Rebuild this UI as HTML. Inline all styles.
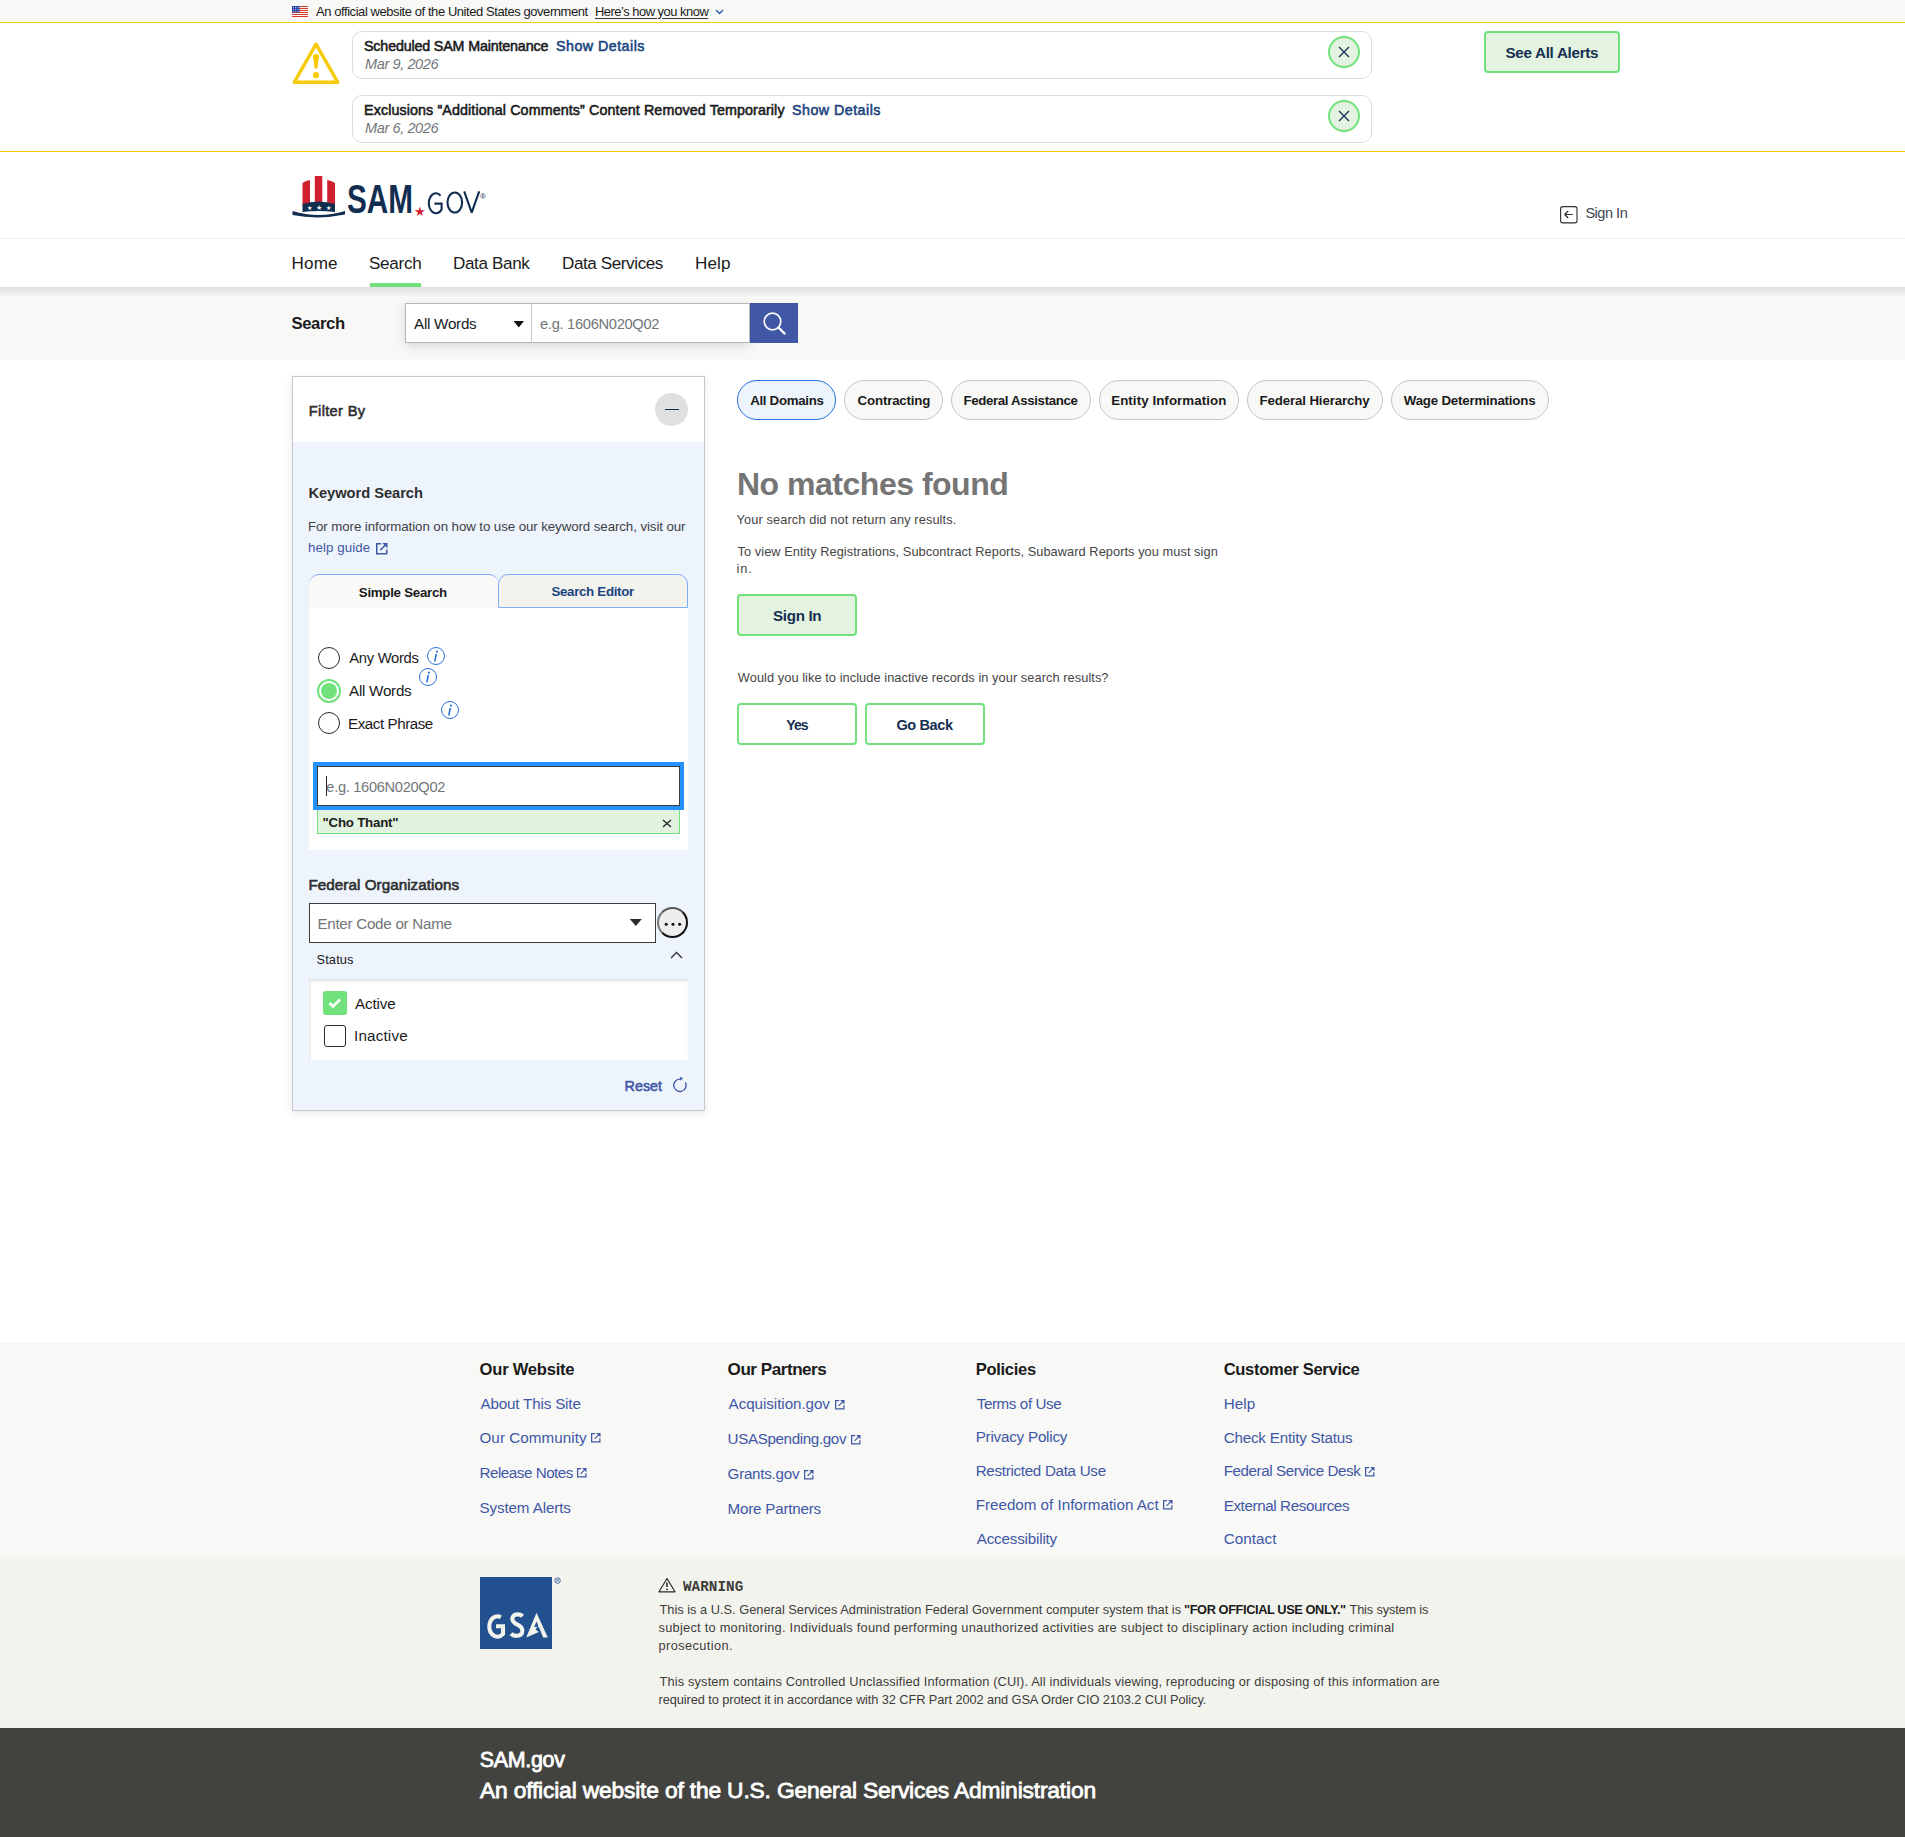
<!DOCTYPE html><html><head><meta charset="utf-8"><title>SAM.gov | Search</title><style>html,body{margin:0;padding:0;background:#fff;width:1905px;height:1837px;overflow:hidden;position:relative;font-family:'Liberation Sans',sans-serif}.t{position:absolute;white-space:nowrap}</style></head><body><div style="position:absolute;left:0px;top:0px;width:1905px;height:22px;background:#f8f8f6"></div>
<div style="position:absolute;left:0px;top:22px;width:1905px;height:1px;background:#f9cc08"></div>
<div style="position:absolute;left:0px;top:151px;width:1905px;height:1px;background:#f9cc08"></div>
<div style="position:absolute;left:0px;top:238px;width:1905px;height:1px;background:#efefea"></div>
<div style="position:absolute;left:0px;top:287px;width:1905px;height:73px;background:#f8f8f6"></div>
<div style="position:absolute;left:0px;top:287px;width:1905px;height:10px;background:linear-gradient(rgba(0,0,0,0.10),rgba(0,0,0,0))"></div>
<svg style="position:absolute;left:292px;top:6px;" width="16" height="11" viewBox="0 0 16 11"><rect width="16" height="11" fill="#fff"/><rect y="0" width="16" height="1.05" fill="#d83a2a"/><rect y="2" width="16" height="1.05" fill="#d83a2a"/><rect y="4" width="16" height="1.05" fill="#d83a2a"/><rect y="6" width="16" height="1.05" fill="#d83a2a"/><rect y="8" width="16" height="1.05" fill="#d83a2a"/><rect y="10" width="16" height="1.05" fill="#d83a2a"/><rect width="7.5" height="6.5" fill="#1f3fa3"/><circle cx="1.4" cy="1.2" r="0.55" fill="#fff"/><circle cx="3.7" cy="1.2" r="0.55" fill="#fff"/><circle cx="6.0" cy="1.2" r="0.55" fill="#fff"/><circle cx="1.4" cy="3.2" r="0.55" fill="#fff"/><circle cx="3.7" cy="3.2" r="0.55" fill="#fff"/><circle cx="6.0" cy="3.2" r="0.55" fill="#fff"/><circle cx="1.4" cy="5.2" r="0.55" fill="#fff"/><circle cx="3.7" cy="5.2" r="0.55" fill="#fff"/><circle cx="6.0" cy="5.2" r="0.55" fill="#fff"/></svg>
<span class="t" style="left:316.00px;top:5.80px;font-family:'Liberation Sans';font-size:12.97px;line-height:12.97px;font-weight:400;font-style:normal;letter-spacing:-0.420px;color:#1b1b1b;">An official website of the United States government</span>
<span class="t" style="left:595.00px;top:5.60px;font-family:'Liberation Sans';font-size:12.95px;line-height:12.95px;font-weight:400;font-style:normal;letter-spacing:-0.500px;color:#1b1b1b;text-decoration:underline;text-underline-offset:1.5px;text-decoration-color:#3a3a3a">Here’s how you know</span>
<svg style="position:absolute;left:715px;top:9px;" width="9" height="6" viewBox="0 0 9 6"><path d="M1 1 L4.5 4.5 L8 1" fill="none" stroke="#2e5ab8" stroke-width="1.5"/></svg>
<svg style="position:absolute;left:292px;top:41px;" width="48" height="44" viewBox="0 0 48 44"><path d="M24 3.2 L45.8 41.3 H2.2 Z" fill="none" stroke="#f7cb09" stroke-width="3.4" stroke-linejoin="round"/><path d="M21 15.2 Q21 13 24 13 Q27 13 27 15.2 L25.6 26.3 Q25.4 27.8 24 27.8 Q22.6 27.8 22.4 26.3 Z" fill="#f7cb09"/><circle cx="24" cy="34.2" r="3.1" fill="#f7cb09"/></svg>
<div style="position:absolute;left:352px;top:31px;width:1020px;height:48px;box-sizing:border-box;border:1px solid #dcdcdc;border-radius:10px;background:#fff"></div>
<div style="position:absolute;left:352px;top:95px;width:1020px;height:48px;box-sizing:border-box;border:1px solid #dcdcdc;border-radius:10px;background:#fff"></div>
<div style="position:absolute;left:1328px;top:36px;width:32px;height:32px;box-sizing:border-box;border:2px solid #70e17b;border-radius:50%;background:#e3f3df"></div>
<svg style="position:absolute;left:1337px;top:45px;" width="14" height="14" viewBox="0 0 14 14"><path d="M2 2 L12 12 M12 2 L2 12" stroke="#162e51" stroke-width="1.3"/></svg>
<div style="position:absolute;left:1328px;top:100px;width:32px;height:32px;box-sizing:border-box;border:2px solid #70e17b;border-radius:50%;background:#e3f3df"></div>
<svg style="position:absolute;left:1337px;top:109px;" width="14" height="14" viewBox="0 0 14 14"><path d="M2 2 L12 12 M12 2 L2 12" stroke="#162e51" stroke-width="1.3"/></svg>
<span class="t" style="left:364.00px;top:39.00px;font-family:'Liberation Sans';font-size:14.3px;line-height:14.3px;font-weight:400;font-style:normal;letter-spacing:-0.167px;color:#1b1b1b;-webkit-text-stroke:0.55px #1b1b1b">Scheduled SAM Maintenance</span>
<span class="t" style="left:556.00px;top:39.00px;font-family:'Liberation Sans';font-size:14.3px;line-height:14.3px;font-weight:400;font-style:normal;letter-spacing:0.455px;color:#1a4480;-webkit-text-stroke:0.55px #1a4480">Show Details</span>
<span class="t" style="left:365.00px;top:57.00px;font-family:'Liberation Sans';font-size:14.54px;line-height:14.54px;font-weight:400;font-style:italic;letter-spacing:-0.400px;color:#71767a;">Mar 9, 2026</span>
<span class="t" style="left:364.00px;top:103.00px;font-family:'Liberation Sans';font-size:14.3px;line-height:14.3px;font-weight:400;font-style:normal;letter-spacing:0.102px;color:#1b1b1b;-webkit-text-stroke:0.55px #1b1b1b">Exclusions “Additional Comments” Content Removed Temporarily</span>
<span class="t" style="left:792.00px;top:103.00px;font-family:'Liberation Sans';font-size:14.3px;line-height:14.3px;font-weight:400;font-style:normal;letter-spacing:0.455px;color:#1a4480;-webkit-text-stroke:0.55px #1a4480">Show Details</span>
<span class="t" style="left:365.00px;top:120.60px;font-family:'Liberation Sans';font-size:14.54px;line-height:14.54px;font-weight:400;font-style:italic;letter-spacing:-0.400px;color:#71767a;">Mar 6, 2026</span>
<div style="position:absolute;left:1484px;top:31px;width:136px;height:42px;box-sizing:border-box;border:2px solid #70e17b;border-radius:4px;background:#e3f3df"></div>
<span class="t" style="left:1505.50px;top:45.40px;font-family:'Liberation Sans';font-size:15.2px;line-height:15.2px;font-weight:700;font-style:normal;letter-spacing:-0.292px;color:#162e51;">See All Alerts</span>
<svg style="position:absolute;left:292px;top:175px;" width="200" height="44" viewBox="0 0 200 44"><path d="M10.5 8 Q14 5.5 18 5 V30 H10.5 Z" fill="#d0202f"/><rect x="22.8" y="1" width="7.5" height="29" fill="#d0202f"/><path d="M35.2 5 Q39 5.5 43 8 V30 H35.2 Z" fill="#d0202f"/><path d="M10.5 29 Q26.5 24 43 29 V37 Q26.5 35 10.5 37 Z" fill="#112e51"/><text x="15" y="35" font-size="6" fill="#fff" font-family="Liberation Sans">★</text><text x="24" y="35" font-size="7" fill="#fff" font-family="Liberation Sans">★</text><text x="34" y="35" font-size="6" fill="#fff" font-family="Liberation Sans">★</text><path d="M0.5 36 Q26.5 44 53 36 V39.5 Q26.5 45 0.5 40 Z" fill="#112e51"/><text x="55" y="38" font-size="40" font-weight="700" fill="#112e51" font-family="Liberation Sans" textLength="66" lengthAdjust="spacingAndGlyphs">SAM</text><text x="121.5" y="41" font-size="13" fill="#d0202f" font-family="Liberation Sans">★</text><g fill="none" stroke="#112e51" stroke-width="2.1"><path d="M148.6 20.6 A7.2 10 0 1 0 149.6 34.5 V28.6 H142.4"/><ellipse cx="162.8" cy="27.5" rx="7.3" ry="10"/><path d="M172.2 16.4 L179.7 37.6 L187.2 16.4" stroke-linejoin="bevel"/></g><text x="188" y="23.5" font-size="8" fill="#112e51" font-family="Liberation Sans">®</text></svg>
<svg style="position:absolute;left:1559px;top:205px;" width="20" height="20" viewBox="0 0 20 20"><rect x="1.6" y="1.6" width="16.4" height="16.3" rx="2.2" fill="none" stroke="#2d2e2a" stroke-width="1.1"/><path d="M5.6 9.5 H13.7 M5.6 9.5 L9.2 6 M5.6 9.5 L9.2 13" fill="none" stroke="#2d2e2a" stroke-width="1.2"/></svg>
<span class="t" style="left:1585.40px;top:206.30px;font-family:'Liberation Sans';font-size:14.54px;line-height:14.54px;font-weight:400;font-style:normal;letter-spacing:-0.483px;color:#3d4551;">Sign In</span>
<span class="t" style="left:291.50px;top:254.80px;font-family:'Liberation Sans';font-size:17.1px;line-height:17.1px;font-weight:400;font-style:normal;letter-spacing:0.167px;color:#1b1b1b;">Home</span>
<span class="t" style="left:369.00px;top:254.80px;font-family:'Liberation Sans';font-size:17.1px;line-height:17.1px;font-weight:400;font-style:normal;letter-spacing:-0.300px;color:#1b1b1b;">Search</span>
<span class="t" style="left:453.00px;top:254.80px;font-family:'Liberation Sans';font-size:17.1px;line-height:17.1px;font-weight:400;font-style:normal;letter-spacing:-0.375px;color:#1b1b1b;">Data Bank</span>
<span class="t" style="left:562.00px;top:254.80px;font-family:'Liberation Sans';font-size:17.1px;line-height:17.1px;font-weight:400;font-style:normal;letter-spacing:-0.417px;color:#1b1b1b;">Data Services</span>
<span class="t" style="left:695.00px;top:254.80px;font-family:'Liberation Sans';font-size:17.1px;line-height:17.1px;font-weight:400;font-style:normal;letter-spacing:0.133px;color:#1b1b1b;">Help</span>
<div style="position:absolute;left:370px;top:283px;width:51px;height:4px;background:#70e17b"></div>
<div style="position:absolute;left:405px;top:303px;width:345px;height:40px;background:#fff;box-shadow:0 3px 10px rgba(0,0,0,0.13)"></div>
<div style="position:absolute;left:405px;top:303px;width:127px;height:40px;box-sizing:border-box;border:1px solid #b8b8b8;background:#fff"></div>
<div style="position:absolute;left:531px;top:303px;width:219px;height:40px;box-sizing:border-box;border:1px solid #b8b8b8;border-left:1px solid #c8c8c8;background:#fff"></div>
<svg style="position:absolute;left:513px;top:320px;" width="12" height="9" viewBox="0 0 12 9"><path d="M0.5 1 H11 L5.75 7.5 Z" fill="#111"/></svg>
<div style="position:absolute;left:750px;top:303px;width:48px;height:40px;background:#4057a5"></div>
<svg style="position:absolute;left:760px;top:311px;" width="28" height="26" viewBox="0 0 28 26"><circle cx="12.5" cy="10.5" r="8.3" fill="none" stroke="#fff" stroke-width="1.7"/><path d="M18.5 16.5 L24.5 22.5" stroke="#fff" stroke-width="2.4" stroke-linecap="round"/></svg>
<span class="t" style="left:291.50px;top:316.00px;font-family:'Liberation Sans';font-size:16.65px;line-height:16.65px;font-weight:700;font-style:normal;letter-spacing:-0.380px;color:#1b1b1b;">Search</span>
<span class="t" style="left:414.00px;top:316.00px;font-family:'Liberation Sans';font-size:15.2px;line-height:15.2px;font-weight:400;font-style:normal;letter-spacing:-0.250px;color:#1b1b1b;">All Words</span>
<span class="t" style="left:540.00px;top:317.00px;font-family:'Liberation Sans';font-size:14.69px;line-height:14.69px;font-weight:400;font-style:normal;letter-spacing:-0.307px;color:#71767a;">e.g. 1606N020Q02</span>
<div style="position:absolute;left:292px;top:376px;width:413px;height:735px;box-sizing:border-box;border:1px solid #c9c9c9;background:#eef4fb;box-shadow:0 2px 8px rgba(0,0,0,0.10)"></div>
<div style="position:absolute;left:293px;top:377px;width:411px;height:65px;background:#fff"></div>
<div style="position:absolute;left:655px;top:393px;width:33px;height:33px;border-radius:50%;background:#e0e0e0"></div>
<div style="position:absolute;left:665px;top:408.6px;width:14px;height:1.6px;background:#112e51"></div>
<span class="t" style="left:308.80px;top:403.80px;font-family:'Liberation Sans';font-size:14.7px;line-height:14.7px;font-weight:400;font-style:normal;letter-spacing:0.312px;color:#2d2e2f;-webkit-text-stroke:0.55px #2d2e2f">Filter By</span>
<span class="t" style="left:308.40px;top:485.80px;font-family:'Liberation Sans';font-size:14.7px;line-height:14.7px;font-weight:700;font-style:normal;letter-spacing:-0.046px;color:#2d2e2f;">Keyword Search</span>
<span class="t" style="left:308.00px;top:519.70px;font-family:'Liberation Sans';font-size:13.3px;line-height:13.3px;font-weight:400;font-style:normal;letter-spacing:-0.084px;color:#3d4046;">For more information on how to use our keyword search, visit our</span>
<span class="t" style="left:308.00px;top:541.40px;font-family:'Liberation Sans';font-size:13.3px;line-height:13.3px;font-weight:400;font-style:normal;letter-spacing:0.089px;color:#3f57a6;">help guide</span>
<svg style="position:absolute;left:374.5px;top:542px;" width="13.5" height="13.5" viewBox="0 0 13.5 13.5"><g transform="translate(1,1) scale(1.150)"><path d="M4.4 0.65 H0.65 V9.35 H9.35 V5.6" fill="none" stroke="#3f57a6" stroke-width="1.3"/><path d="M3.8 6.2 L8 2" stroke="#3f57a6" stroke-width="1.25"/><path d="M5.4 0 H10 V4.6 Z" fill="#3f57a6"/></g></svg>
<div style="position:absolute;left:309px;top:574px;width:190px;height:34px;box-sizing:border-box;background:#f9f9f7;border-top:1px solid #80acf8;border-radius:10px 10px 0 0"></div>
<div style="position:absolute;left:498px;top:574px;width:190px;height:34px;box-sizing:border-box;background:#f3f3ee;border:1px solid #80acf8;border-radius:10px 10px 0 0"></div>
<span class="t" style="left:358.80px;top:586.00px;font-family:'Liberation Sans';font-size:13.3px;line-height:13.3px;font-weight:700;font-style:normal;letter-spacing:-0.275px;color:#1b1b1b;">Simple Search</span>
<span class="t" style="left:551.40px;top:584.80px;font-family:'Liberation Sans';font-size:13.3px;line-height:13.3px;font-weight:700;font-style:normal;letter-spacing:-0.300px;color:#1a4480;">Search Editor</span>
<div style="position:absolute;left:309px;top:608px;width:379px;height:242px;background:#fff"></div>
<div style="position:absolute;left:318px;top:647px;width:22px;height:22px;box-sizing:border-box;border:1.6px solid #2b2b2b;border-radius:50%"></div>
<div style="position:absolute;left:317px;top:679px;width:24px;height:24px;box-sizing:border-box;border:2.2px solid #70e17b;border-radius:50%;background:#fff"></div>
<div style="position:absolute;left:321px;top:683px;width:16px;height:16px;border-radius:50%;background:#70e17b"></div>
<div style="position:absolute;left:318px;top:712px;width:22px;height:22px;box-sizing:border-box;border:1.6px solid #2b2b2b;border-radius:50%"></div>
<span class="t" style="left:349.20px;top:651.00px;font-family:'Liberation Sans';font-size:14.77px;line-height:14.77px;font-weight:400;font-style:normal;letter-spacing:-0.275px;color:#1b1b1b;">Any Words</span>
<span class="t" style="left:349.00px;top:683.00px;font-family:'Liberation Sans';font-size:15.2px;line-height:15.2px;font-weight:400;font-style:normal;letter-spacing:-0.250px;color:#1b1b1b;">All Words</span>
<span class="t" style="left:348.00px;top:715.60px;font-family:'Liberation Sans';font-size:15.2px;line-height:15.2px;font-weight:400;font-style:normal;letter-spacing:-0.455px;color:#1b1b1b;">Exact Phrase</span>
<div style="position:absolute;left:427px;top:647px;width:18px;height:18px;box-sizing:border-box;border:1.4px solid #2672de;border-radius:50%"></div>
<svg style="position:absolute;left:431px;top:649px;" width="10" height="14" viewBox="0 0 10 14"><circle cx="5.9" cy="2.6" r="1.1" fill="#2672de"/><path d="M5.2 5.5 L3.9 11.8" stroke="#2672de" stroke-width="1.6" stroke-linecap="round"/></svg>
<div style="position:absolute;left:419px;top:668px;width:18px;height:18px;box-sizing:border-box;border:1.4px solid #2672de;border-radius:50%"></div>
<svg style="position:absolute;left:423px;top:670px;" width="10" height="14" viewBox="0 0 10 14"><circle cx="5.9" cy="2.6" r="1.1" fill="#2672de"/><path d="M5.2 5.5 L3.9 11.8" stroke="#2672de" stroke-width="1.6" stroke-linecap="round"/></svg>
<div style="position:absolute;left:441px;top:701px;width:18px;height:18px;box-sizing:border-box;border:1.4px solid #2672de;border-radius:50%"></div>
<svg style="position:absolute;left:445px;top:703px;" width="10" height="14" viewBox="0 0 10 14"><circle cx="5.9" cy="2.6" r="1.1" fill="#2672de"/><path d="M5.2 5.5 L3.9 11.8" stroke="#2672de" stroke-width="1.6" stroke-linecap="round"/></svg>
<div style="position:absolute;left:313px;top:762px;width:371px;height:48px;background:#2491ff"></div>
<div style="position:absolute;left:317px;top:766px;width:363px;height:40px;box-sizing:border-box;border:1px solid #3d3d3d;background:#fff"></div>
<div style="position:absolute;left:326px;top:776px;width:1.3px;height:20px;background:#222"></div>
<span class="t" style="left:326.30px;top:779.60px;font-family:'Liberation Sans';font-size:14.63px;line-height:14.63px;font-weight:400;font-style:normal;letter-spacing:-0.300px;color:#71767a;">e.g. 1606N020Q02</span>
<div style="position:absolute;left:317px;top:810px;width:363px;height:24px;box-sizing:border-box;border:1px solid #70e17b;border-top:none;background:#e1f3df"></div>
<span class="t" style="left:322.50px;top:815.90px;font-family:'Liberation Sans';font-size:13.27px;line-height:13.27px;font-weight:700;font-style:normal;letter-spacing:-0.210px;color:#1b1b1b;">"Cho Thant"</span>
<svg style="position:absolute;left:662px;top:819px;" width="10" height="9" viewBox="0 0 10 9"><path d="M1 1 L9 8 M9 1 L1 8" stroke="#222" stroke-width="1.3"/></svg>
<span class="t" style="left:308.40px;top:877.00px;font-family:'Liberation Sans';font-size:15.2px;line-height:15.2px;font-weight:400;font-style:normal;letter-spacing:0.065px;color:#2d2e2f;-webkit-text-stroke:0.6px #2d2e2f">Federal Organizations</span>
<div style="position:absolute;left:309px;top:903px;width:347px;height:40px;box-sizing:border-box;border:1px solid #3d3d3d;background:#fff"></div>
<span class="t" style="left:317.40px;top:916.30px;font-family:'Liberation Sans';font-size:15.2px;line-height:15.2px;font-weight:400;font-style:normal;letter-spacing:-0.276px;color:#71767a;">Enter Code or Name</span>
<svg style="position:absolute;left:629px;top:918px;" width="14" height="9" viewBox="0 0 14 9"><path d="M0.8 1 H12.8 L6.8 8 Z" fill="#2b2b2b"/></svg>
<div style="position:absolute;left:657px;top:907px;width:31px;height:31px;box-sizing:border-box;border:2px solid #111;border-color:#555 #111 #111 #777;border-radius:50%;background:#eeeeee"></div>
<svg style="position:absolute;left:660px;top:919px;" width="24" height="10" viewBox="0 0 24 10"><circle cx="6.2" cy="5.2" r="1.55" fill="#111"/><circle cx="13" cy="5.2" r="1.55" fill="#111"/><circle cx="19.6" cy="5.2" r="1.55" fill="#111"/></svg>
<span class="t" style="left:316.50px;top:953.70px;font-family:'Liberation Sans';font-size:12.8px;line-height:12.8px;font-weight:400;font-style:normal;letter-spacing:0.140px;color:#1b1b1b;">Status</span>
<svg style="position:absolute;left:670px;top:951px;" width="13" height="8" viewBox="0 0 13 8"><path d="M1 7 L6.5 1.5 L12 7" fill="none" stroke="#333" stroke-width="1.3"/></svg>
<div style="position:absolute;left:309px;top:979px;width:379px;height:81px;background:#fff;box-shadow:inset 1px 2px 3px rgba(0,0,0,0.12)"></div>
<div style="position:absolute;left:323px;top:991px;width:24px;height:24px;border-radius:3px;background:#70e17b"></div>
<svg style="position:absolute;left:327px;top:996px;" width="16" height="14" viewBox="0 0 16 14"><path d="M2.5 7 L6 10.5 L13 3.5" fill="none" stroke="#fff" stroke-width="2.6"/></svg>
<div style="position:absolute;left:324px;top:1025px;width:22px;height:22px;box-sizing:border-box;border:1.6px solid #2b2b2b;border-radius:3px;background:#fff"></div>
<span class="t" style="left:355.00px;top:996.00px;font-family:'Liberation Sans';font-size:15.2px;line-height:15.2px;font-weight:400;font-style:normal;letter-spacing:-0.140px;color:#1b1b1b;">Active</span>
<span class="t" style="left:354.00px;top:1028.00px;font-family:'Liberation Sans';font-size:15.2px;line-height:15.2px;font-weight:400;font-style:normal;letter-spacing:0.186px;color:#1b1b1b;">Inactive</span>
<span class="t" style="left:624.60px;top:1078.70px;font-family:'Liberation Sans';font-size:14.3px;line-height:14.3px;font-weight:400;font-style:normal;letter-spacing:0.025px;color:#3f57a6;-webkit-text-stroke:0.55px #3f57a6">Reset</span>
<svg style="position:absolute;left:670px;top:1074px;" width="20" height="20" viewBox="0 0 20 20"><path d="M15.4 8.4 A6.2 6.2 0 1 1 11 5.2" fill="none" stroke="#3f57a6" stroke-width="1.35"/><path d="M10.3 2.4 L13 4.6 L10.3 6.8 Z" fill="#3f57a6"/></svg>
<div style="position:absolute;left:737px;top:380px;width:99px;height:40px;box-sizing:border-box;border-radius:20px;border:1px solid #2672de;background:#eef4fb"></div>
<span class="t" style="left:750.20px;top:393.60px;font-family:'Liberation Sans';font-size:13.3px;line-height:13.3px;font-weight:700;font-style:normal;letter-spacing:-0.320px;color:#1b1b1b;">All Domains</span>
<div style="position:absolute;left:844px;top:380px;width:99px;height:40px;box-sizing:border-box;border-radius:20px;border:1px solid #c6c6c6;background:#f8f8f6"></div>
<span class="t" style="left:857.60px;top:393.60px;font-family:'Liberation Sans';font-size:13.3px;line-height:13.3px;font-weight:700;font-style:normal;letter-spacing:-0.180px;color:#1b1b1b;">Contracting</span>
<div style="position:absolute;left:951px;top:380px;width:140px;height:40px;box-sizing:border-box;border-radius:20px;border:1px solid #c6c6c6;background:#f8f8f6"></div>
<span class="t" style="left:963.40px;top:393.60px;font-family:'Liberation Sans';font-size:13.3px;line-height:13.3px;font-weight:700;font-style:normal;letter-spacing:-0.365px;color:#1b1b1b;">Federal Assistance</span>
<div style="position:absolute;left:1099px;top:380px;width:140px;height:40px;box-sizing:border-box;border-radius:20px;border:1px solid #c6c6c6;background:#f8f8f6"></div>
<span class="t" style="left:1111.20px;top:393.60px;font-family:'Liberation Sans';font-size:13.3px;line-height:13.3px;font-weight:700;font-style:normal;letter-spacing:0.082px;color:#1b1b1b;">Entity Information</span>
<div style="position:absolute;left:1247px;top:380px;width:136px;height:40px;box-sizing:border-box;border-radius:20px;border:1px solid #c6c6c6;background:#f8f8f6"></div>
<span class="t" style="left:1259.50px;top:393.60px;font-family:'Liberation Sans';font-size:13.3px;line-height:13.3px;font-weight:700;font-style:normal;letter-spacing:-0.138px;color:#1b1b1b;">Federal Hierarchy</span>
<div style="position:absolute;left:1391px;top:380px;width:158px;height:40px;box-sizing:border-box;border-radius:20px;border:1px solid #c6c6c6;background:#f8f8f6"></div>
<span class="t" style="left:1403.80px;top:393.60px;font-family:'Liberation Sans';font-size:13.3px;line-height:13.3px;font-weight:700;font-style:normal;letter-spacing:-0.206px;color:#1b1b1b;">Wage Determinations</span>
<span class="t" style="left:737.00px;top:468.20px;font-family:'Liberation Sans';font-size:32.04px;line-height:32.04px;font-weight:700;font-style:normal;letter-spacing:-0.507px;color:#757575;">No matches found</span>
<span class="t" style="left:736.60px;top:513.80px;font-family:'Liberation Sans';font-size:12.8px;line-height:12.8px;font-weight:400;font-style:normal;letter-spacing:0.103px;color:#454545;">Your search did not return any results.</span>
<span class="t" style="left:737.60px;top:545.80px;font-family:'Liberation Sans';font-size:12.8px;line-height:12.8px;font-weight:400;font-style:normal;letter-spacing:0.054px;color:#454545;">To view Entity Registrations, Subcontract Reports, Subaward Reports you must sign</span>
<span class="t" style="left:736.60px;top:563.40px;font-family:'Liberation Sans';font-size:12.8px;line-height:12.8px;font-weight:400;font-style:normal;letter-spacing:0.850px;color:#454545;">in.</span>
<div style="position:absolute;left:737px;top:594px;width:120px;height:42px;box-sizing:border-box;border:2px solid #70e17b;border-radius:4px;background:#e3f3df"></div>
<span class="t" style="left:773.00px;top:608.00px;font-family:'Liberation Sans';font-size:15.2px;line-height:15.2px;font-weight:700;font-style:normal;letter-spacing:-0.333px;color:#162e51;">Sign In</span>
<span class="t" style="left:737.80px;top:671.90px;font-family:'Liberation Sans';font-size:12.8px;line-height:12.8px;font-weight:400;font-style:normal;letter-spacing:0.060px;color:#454545;">Would you like to include inactive records in your search results?</span>
<div style="position:absolute;left:737px;top:703px;width:120px;height:42px;box-sizing:border-box;border:2px solid #70e17b;border-radius:4px;background:#fff"></div>
<div style="position:absolute;left:865px;top:703px;width:120px;height:42px;box-sizing:border-box;border:2px solid #70e17b;border-radius:4px;background:#fff"></div>
<span class="t" style="left:786.30px;top:717.60px;font-family:'Liberation Sans';font-size:14.06px;line-height:14.06px;font-weight:700;font-style:normal;letter-spacing:-0.950px;color:#162e51;">Yes</span>
<span class="t" style="left:896.40px;top:717.60px;font-family:'Liberation Sans';font-size:14.54px;line-height:14.54px;font-weight:700;font-style:normal;letter-spacing:-0.383px;color:#162e51;">Go Back</span>
<div style="position:absolute;left:0px;top:1343px;width:1905px;height:214px;background:#f8f8f6"></div>
<div style="position:absolute;left:0px;top:1557px;width:1905px;height:171px;background:#f3f3ee"></div>
<div style="position:absolute;left:0px;top:1728px;width:1905px;height:109px;background:#42433e"></div>
<span class="t" style="left:479.60px;top:1361.70px;font-family:'Liberation Sans';font-size:16.62px;line-height:16.62px;font-weight:700;font-style:normal;letter-spacing:-0.260px;color:#1b1b1b;">Our Website</span>
<span class="t" style="left:727.60px;top:1360.70px;font-family:'Liberation Sans';font-size:17.1px;line-height:17.1px;font-weight:700;font-style:normal;letter-spacing:-0.482px;color:#1b1b1b;">Our Partners</span>
<span class="t" style="left:975.70px;top:1361.70px;font-family:'Liberation Sans';font-size:16.54px;line-height:16.54px;font-weight:700;font-style:normal;letter-spacing:-0.300px;color:#1b1b1b;">Policies</span>
<span class="t" style="left:1223.70px;top:1361.70px;font-family:'Liberation Sans';font-size:16.54px;line-height:16.54px;font-weight:700;font-style:normal;letter-spacing:-0.300px;color:#1b1b1b;">Customer Service</span>
<span class="t" style="left:480.50px;top:1395.70px;font-family:'Liberation Sans';font-size:15.2px;line-height:15.2px;font-weight:400;font-style:normal;letter-spacing:-0.171px;color:#3f57a6;">About This Site</span>
<span class="t" style="left:479.50px;top:1430.00px;font-family:'Liberation Sans';font-size:15.2px;line-height:15.2px;font-weight:400;font-style:normal;letter-spacing:0.058px;color:#3f57a6;">Our Community</span>
<svg style="position:absolute;left:589.5px;top:1432px;" width="11.5" height="11.5" viewBox="0 0 11.5 11.5"><g transform="translate(1,1) scale(0.950)"><path d="M4.4 0.65 H0.65 V9.35 H9.35 V5.6" fill="none" stroke="#3f57a6" stroke-width="1.3"/><path d="M3.8 6.2 L8 2" stroke="#3f57a6" stroke-width="1.25"/><path d="M5.4 0 H10 V4.6 Z" fill="#3f57a6"/></g></svg>
<span class="t" style="left:479.50px;top:1464.80px;font-family:'Liberation Sans';font-size:15.2px;line-height:15.2px;font-weight:400;font-style:normal;letter-spacing:-0.475px;color:#3f57a6;">Release Notes</span>
<svg style="position:absolute;left:576px;top:1467px;" width="11.5" height="11.5" viewBox="0 0 11.5 11.5"><g transform="translate(1,1) scale(0.950)"><path d="M4.4 0.65 H0.65 V9.35 H9.35 V5.6" fill="none" stroke="#3f57a6" stroke-width="1.3"/><path d="M3.8 6.2 L8 2" stroke="#3f57a6" stroke-width="1.25"/><path d="M5.4 0 H10 V4.6 Z" fill="#3f57a6"/></g></svg>
<span class="t" style="left:479.50px;top:1500.10px;font-family:'Liberation Sans';font-size:15.2px;line-height:15.2px;font-weight:400;font-style:normal;letter-spacing:-0.125px;color:#3f57a6;">System Alerts</span>
<span class="t" style="left:728.60px;top:1395.80px;font-family:'Liberation Sans';font-size:15.2px;line-height:15.2px;font-weight:400;font-style:normal;letter-spacing:-0.057px;color:#3f57a6;">Acquisition.gov</span>
<svg style="position:absolute;left:833.6px;top:1399px;" width="11.5" height="11.5" viewBox="0 0 11.5 11.5"><g transform="translate(1,1) scale(0.950)"><path d="M4.4 0.65 H0.65 V9.35 H9.35 V5.6" fill="none" stroke="#3f57a6" stroke-width="1.3"/><path d="M3.8 6.2 L8 2" stroke="#3f57a6" stroke-width="1.25"/><path d="M5.4 0 H10 V4.6 Z" fill="#3f57a6"/></g></svg>
<span class="t" style="left:727.60px;top:1430.80px;font-family:'Liberation Sans';font-size:15.2px;line-height:15.2px;font-weight:400;font-style:normal;letter-spacing:-0.371px;color:#3f57a6;">USASpending.gov</span>
<svg style="position:absolute;left:849.9px;top:1434px;" width="11.5" height="11.5" viewBox="0 0 11.5 11.5"><g transform="translate(1,1) scale(0.950)"><path d="M4.4 0.65 H0.65 V9.35 H9.35 V5.6" fill="none" stroke="#3f57a6" stroke-width="1.3"/><path d="M3.8 6.2 L8 2" stroke="#3f57a6" stroke-width="1.25"/><path d="M5.4 0 H10 V4.6 Z" fill="#3f57a6"/></g></svg>
<span class="t" style="left:727.60px;top:1465.60px;font-family:'Liberation Sans';font-size:15.2px;line-height:15.2px;font-weight:400;font-style:normal;letter-spacing:-0.267px;color:#3f57a6;">Grants.gov</span>
<svg style="position:absolute;left:802.5px;top:1469px;" width="11.5" height="11.5" viewBox="0 0 11.5 11.5"><g transform="translate(1,1) scale(0.950)"><path d="M4.4 0.65 H0.65 V9.35 H9.35 V5.6" fill="none" stroke="#3f57a6" stroke-width="1.3"/><path d="M3.8 6.2 L8 2" stroke="#3f57a6" stroke-width="1.25"/><path d="M5.4 0 H10 V4.6 Z" fill="#3f57a6"/></g></svg>
<span class="t" style="left:727.60px;top:1500.50px;font-family:'Liberation Sans';font-size:15.2px;line-height:15.2px;font-weight:400;font-style:normal;letter-spacing:-0.217px;color:#3f57a6;">More Partners</span>
<span class="t" style="left:976.70px;top:1395.70px;font-family:'Liberation Sans';font-size:15.2px;line-height:15.2px;font-weight:400;font-style:normal;letter-spacing:-0.400px;color:#3f57a6;">Terms of Use</span>
<span class="t" style="left:975.70px;top:1429.40px;font-family:'Liberation Sans';font-size:15.2px;line-height:15.2px;font-weight:400;font-style:normal;letter-spacing:-0.215px;color:#3f57a6;">Privacy Policy</span>
<span class="t" style="left:975.70px;top:1462.60px;font-family:'Liberation Sans';font-size:15.2px;line-height:15.2px;font-weight:400;font-style:normal;letter-spacing:-0.306px;color:#3f57a6;">Restricted Data Use</span>
<span class="t" style="left:975.70px;top:1496.90px;font-family:'Liberation Sans';font-size:15.2px;line-height:15.2px;font-weight:400;font-style:normal;letter-spacing:-0.008px;color:#3f57a6;">Freedom of Information Act</span>
<svg style="position:absolute;left:1162.2px;top:1499px;" width="11.5" height="11.5" viewBox="0 0 11.5 11.5"><g transform="translate(1,1) scale(0.950)"><path d="M4.4 0.65 H0.65 V9.35 H9.35 V5.6" fill="none" stroke="#3f57a6" stroke-width="1.3"/><path d="M3.8 6.2 L8 2" stroke="#3f57a6" stroke-width="1.25"/><path d="M5.4 0 H10 V4.6 Z" fill="#3f57a6"/></g></svg>
<span class="t" style="left:976.70px;top:1531.20px;font-family:'Liberation Sans';font-size:15.2px;line-height:15.2px;font-weight:400;font-style:normal;letter-spacing:-0.183px;color:#3f57a6;">Accessibility</span>
<span class="t" style="left:1223.70px;top:1395.90px;font-family:'Liberation Sans';font-size:15.2px;line-height:15.2px;font-weight:400;font-style:normal;letter-spacing:0.100px;color:#3f57a6;">Help</span>
<span class="t" style="left:1223.70px;top:1429.60px;font-family:'Liberation Sans';font-size:15.2px;line-height:15.2px;font-weight:400;font-style:normal;letter-spacing:-0.200px;color:#3f57a6;">Check Entity Status</span>
<span class="t" style="left:1223.70px;top:1462.70px;font-family:'Liberation Sans';font-size:15.2px;line-height:15.2px;font-weight:400;font-style:normal;letter-spacing:-0.421px;color:#3f57a6;">Federal Service Desk</span>
<svg style="position:absolute;left:1363.7px;top:1466px;" width="11.5" height="11.5" viewBox="0 0 11.5 11.5"><g transform="translate(1,1) scale(0.950)"><path d="M4.4 0.65 H0.65 V9.35 H9.35 V5.6" fill="none" stroke="#3f57a6" stroke-width="1.3"/><path d="M3.8 6.2 L8 2" stroke="#3f57a6" stroke-width="1.25"/><path d="M5.4 0 H10 V4.6 Z" fill="#3f57a6"/></g></svg>
<span class="t" style="left:1223.70px;top:1497.60px;font-family:'Liberation Sans';font-size:15.2px;line-height:15.2px;font-weight:400;font-style:normal;letter-spacing:-0.394px;color:#3f57a6;">External Resources</span>
<span class="t" style="left:1223.70px;top:1531.30px;font-family:'Liberation Sans';font-size:15.2px;line-height:15.2px;font-weight:400;font-style:normal;letter-spacing:0.067px;color:#3f57a6;">Contact</span>
<svg style="position:absolute;left:480px;top:1576px;" width="82" height="74" viewBox="0 0 82 74"><rect x="0" y="1" width="72" height="72" fill="#23518f"/><g fill="none" stroke="#f3f3ee" stroke-width="4.1"><path d="M20.8 41.2 A8.2 10.2 0 1 0 23 58 V50.2 H16"/><path d="M42.6 40.3 C40 37.8 35 37.6 33 40.6 C31 43.8 33.5 46.6 37.5 48.6 C41.5 50.6 43.5 53 42 56.8 C40.3 60.5 34 60.8 31 57.8"/></g><path d="M56.5 36.7 L67.8 61.4 H63.2 L58.3 49.8 L55.5 53.6 L58.9 56 L46.2 61.4 Z M56.5 45.6 L54.2 51.1 H58.8 Z" fill="#f3f3ee" fill-rule="evenodd"/><circle cx="77.6" cy="4.6" r="2.7" fill="none" stroke="#23518f" stroke-width="0.8"/><text x="76.1" y="6.3" font-size="4.4" fill="#23518f" font-family="Liberation Sans">R</text></svg>
<svg style="position:absolute;left:658px;top:1577px;" width="18" height="16" viewBox="0 0 18 16"><path d="M9 1.5 L17 14.8 H1 Z" fill="none" stroke="#2b2b2b" stroke-width="1.2" stroke-linejoin="round"/><path d="M9 5.5 V10" stroke="#2b2b2b" stroke-width="1.6"/><circle cx="9" cy="12.3" r="0.9" fill="#2b2b2b"/></svg>
<span class="t" style="left:683.00px;top:1580.20px;font-family:'Liberation Mono';font-size:14.3px;line-height:14.3px;font-weight:700;font-style:normal;letter-spacing:0.033px;color:#3d3d3a;">WARNING</span>
<span class="t" style="left:659.50px;top:1604.00px;font-family:'Liberation Sans';font-size:12.8px;line-height:12.8px;font-weight:400;font-style:normal;letter-spacing:0.003px;color:#3d3d3a;">This is a U.S. General Services Administration Federal Government computer system that is</span>
<span class="t" style="left:1184.00px;top:1604.00px;font-family:'Liberation Sans';font-size:12.8px;line-height:12.8px;font-weight:700;font-style:normal;letter-spacing:-0.404px;color:#1b1b1b;">"FOR OFFICIAL USE ONLY."</span>
<span class="t" style="left:1349.50px;top:1604.00px;font-family:'Liberation Sans';font-size:12.8px;line-height:12.8px;font-weight:400;font-style:normal;letter-spacing:-0.162px;color:#3d3d3a;">This system is</span>
<span class="t" style="left:658.50px;top:1621.50px;font-family:'Liberation Sans';font-size:12.8px;line-height:12.8px;font-weight:400;font-style:normal;letter-spacing:0.257px;color:#3d3d3a;">subject to monitoring. Individuals found performing unauthorized activities are subject to disciplinary action including criminal</span>
<span class="t" style="left:658.50px;top:1639.80px;font-family:'Liberation Sans';font-size:12.8px;line-height:12.8px;font-weight:400;font-style:normal;letter-spacing:0.391px;color:#3d3d3a;">prosecution.</span>
<span class="t" style="left:659.50px;top:1676.30px;font-family:'Liberation Sans';font-size:12.8px;line-height:12.8px;font-weight:400;font-style:normal;letter-spacing:0.151px;color:#3d3d3a;">This system contains Controlled Unclassified Information (CUI). All individuals viewing, reproducing or disposing of this information are</span>
<span class="t" style="left:658.50px;top:1693.80px;font-family:'Liberation Sans';font-size:12.8px;line-height:12.8px;font-weight:400;font-style:normal;letter-spacing:-0.087px;color:#3d3d3a;">required to protect it in accordance with 32 CFR Part 2002 and GSA Order CIO 2103.2 CUI Policy.</span>
<span class="t" style="left:479.70px;top:1749.80px;font-family:'Liberation Sans';font-size:21.4px;line-height:21.4px;font-weight:400;font-style:normal;letter-spacing:-0.267px;color:#ffffff;-webkit-text-stroke:0.8px #fff">SAM.gov</span>
<span class="t" style="left:480.00px;top:1779.00px;font-family:'Liberation Sans';font-size:22.8px;line-height:22.8px;font-weight:400;font-style:normal;letter-spacing:-0.173px;color:#ffffff;-webkit-text-stroke:0.8px #fff">An official website of the U.S. General Services Administration</span></body></html>
